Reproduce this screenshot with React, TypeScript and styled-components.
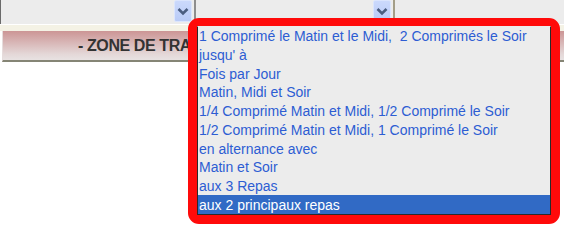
import React from "react";
import styled, { createGlobalStyle } from "styled-components";

const GlobalStyle = createGlobalStyle`
  html, body {
    margin: 0;
    padding: 0;
    background: #ffffff;
  }
  body {
    font-family: "Liberation Sans", Arial, sans-serif;
  }
`;

const Page = styled.div`
  position: relative;
  width: 564px;
  height: 226px;
  overflow: hidden;
  background: #ffffff;
`;

const TopRow = styled.div`
  display: flex;
  height: 24px;
  background: #ececec;
`;

const Field = styled.div<{ $width?: number; $leftLine?: boolean }>`
  display: flex;
  justify-content: flex-end;
  align-items: flex-start;
  box-sizing: border-box;
  width: ${(p) => (p.$width ? `${p.$width}px` : "auto")};
  flex: ${(p) => (p.$width ? "none" : "1")};
  border-left: ${(p) => (p.$leftLine ? "1px solid #6a6a6a" : "none")};
  padding-right: 2px;
`;

const Divider = styled.div<{ $color: string }>`
  width: 2px;
  background: ${(p) => p.$color};
`;

const DropButton = styled.div`
  display: flex;
  align-items: center;
  justify-content: center;
  width: 18px;
  height: 22px;
  box-sizing: border-box;
  background: linear-gradient(#cbd9fc, #b9cbf7);
  border: 1px solid #dbe5fd;
  border-radius: 2px;
`;

const Strip = styled.div`
  height: 7px;
  border-top: 1px solid #ffffff;
  box-sizing: border-box;
  background: #f4f2e5;
`;

const Header = styled.div`
  display: flex;
  align-items: center;
  height: 31px;
  margin-left: 2px;
  padding-left: 75px;
  box-sizing: border-box;
  border-left: 1px solid #e6dcdc;
  border-bottom: 2px solid #858575;
  background: linear-gradient(#cc9595, #e4d8d8 80%, #e8e2e2);
  color: #333333;
  font-size: 16px;
  font-weight: bold;
  letter-spacing: -0.4px;
  white-space: pre;
`;

const Popup = styled.div`
  position: absolute;
  left: 188px;
  top: 18px;
  width: 372px;
  height: 206px;
  box-sizing: border-box;
  border: 9px solid #ff0a0a;
  border-top-width: 8px;
  border-radius: 11px;
  background: #ff0a0a;
`;

const ListBox = styled.ul`
  list-style: none;
  margin: 0;
  padding: 0;
  height: 100%;
  box-sizing: border-box;
  background: #ececec;
  border: 1px solid #2a2a2a;
  border-top-color: #ececec;
  display: flex;
  flex-direction: column;
`;

const Option = styled.li<{ $selected?: boolean }>`
  flex: 1;
  display: flex;
  align-items: center;
  padding-left: 1px;
  font-size: 14px;
  white-space: pre;
  color: ${(p) => (p.$selected ? "#ffffff" : "#2d5dd3")};
  background: ${(p) => (p.$selected ? "#316ac5" : "transparent")};
`;

const Chevron = () => (
  <svg width="12" height="9" viewBox="0 0 12 9">
    <path d="M1.5 2 L6 6.5 L10.5 2" fill="none" stroke="#4a5d80" strokeWidth="2.6" />
  </svg>
);

const options = [
  "1 Comprimé le Matin et le Midi,  2 Comprimés le Soir",
  "jusqu' à",
  "Fois par Jour",
  "Matin, Midi et Soir",
  "1/4 Comprimé Matin et Midi, 1/2 Comprimé le Soir",
  "1/2 Comprimé Matin et Midi, 1 Comprimé le Soir",
  "en alternance avec",
  "Matin et Soir",
  "aux 3 Repas",
  "aux 2 principaux repas",
];

export default function App() {
  return (
    <Page>
      <GlobalStyle />
      <TopRow>
        <Field $width={194} $leftLine>
          <DropButton>
            <Chevron />
          </DropButton>
        </Field>
        <Divider $color="#8e8e8e" />
        <Field $width={197}>
          <DropButton>
            <Chevron />
          </DropButton>
        </Field>
        <Divider $color="#a49e88" />
        <Field />
      </TopRow>
      <Strip />
      <Header>- ZONE DE TRAITEMENT -</Header>
      <Popup>
        <ListBox>
          {options.map((o, i) => (
            <Option key={i} $selected={i === options.length - 1}>
              {o}
            </Option>
          ))}
        </ListBox>
      </Popup>
    </Page>
  );
}
